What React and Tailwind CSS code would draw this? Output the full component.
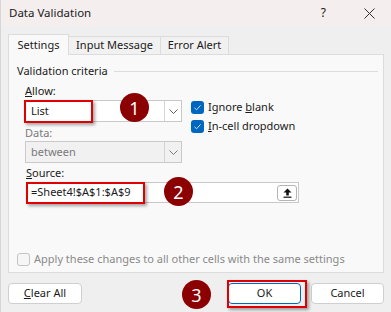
import React from "react";

const font = { fontFamily: '"Noto Sans", "Open Sans", Arial, sans-serif' };

function Badge({ n, className }) {
  return (
    <div
      className={`absolute w-[29px] h-[29px] rounded-full bg-[#8b0000] text-white flex items-center justify-center text-[18px] leading-none ${className}`}
    >
      {n}
    </div>
  );
}

function Check({ checked, disabled }) {
  if (checked) {
    return (
      <span className="w-[13px] h-[13px] rounded-[3px] bg-[#0067c0] flex items-center justify-center shrink-0">
        <svg width="9" height="9" viewBox="0 0 9 9">
          <path d="M1.5 4.8 L3.6 6.8 L7.5 2.4" stroke="#cfe3f5" strokeWidth="1" fill="none" />
        </svg>
      </span>
    );
  }
  return (
    <span
      className={`w-[13px] h-[13px] rounded-[3px] border shrink-0 ${disabled ? "border-[#c4c4c4] bg-[#f6f6f6]" : "border-[#888] bg-white"}`}
    />
  );
}

function Chevron({ color = "#5f5f5f" }) {
  return (
    <svg width="9" height="5" viewBox="0 0 9 5">
      <path d="M0.5 0.5 L4.5 4.5 L8.5 0.5" stroke={color} strokeWidth="1" fill="none" />
    </svg>
  );
}

export default function App() {
  return (
    <div
      className="relative w-[391px] h-[312px] bg-[#efefef] overflow-hidden text-[11px] text-[#1a1a1a] border-l border-[#d6d6d6]"
      style={font}
    >
      {/* Title bar */}
      <div className="h-[26px] bg-[#f4eeee] flex items-center pl-[8px] pr-[16px]">
        <span className="text-[11.5px]">Data Validation</span>
        <span className="ml-auto text-[12px] mr-[38px]">?</span>
        <svg width="11" height="11" viewBox="0 0 11 11">
          <path d="M0.5 0.5 L10.5 10.5 M10.5 0.5 L0.5 10.5" stroke="#333" strokeWidth="1" />
        </svg>
      </div>

      {/* Tabs */}
      <div className="flex items-end h-[28px] pl-[7px]">
        <div className="h-[21px] w-[61px] bg-[#f9f9f9] border border-b-0 border-[#dcdcdc] flex items-center justify-center relative top-[1px] z-10">
          Settings
        </div>
        <div className="h-[18px] w-[92px] bg-[#f1f1f1] border border-l-0 border-b-0 border-[#dcdcdc] flex items-center justify-center">
          Input Message
        </div>
        <div className="h-[18px] w-[68px] bg-[#f1f1f1] border border-l-0 border-b-0 border-[#dcdcdc] flex items-center justify-center">
          Error Alert
        </div>
      </div>

      {/* Panel */}
      <div className="relative mx-[7px] h-[219px] bg-[#f9f9f9] border border-[#dcdcdc]">
        <div className="flex items-center h-[15px] mt-[9px] pl-[8px] pr-[5px]">
          <span>Validation criteria</span>
          <div className="flex-1 h-px bg-[#dcdcdc] ml-[6px]" />
        </div>

        <div className="flex pl-[16px] mt-[4px]">
          <div className="w-[157px] flex flex-col">
            <span className="h-[16px] leading-[16px]">
              <u>A</u>llow:
            </span>
            <div className="mt-[1px] h-[22px] bg-white border border-[#c8c8c8] flex items-center">
              <span className="pl-[5px]">List</span>
              <div className="ml-auto h-full w-[17px] border-l border-[#d4d4d4] flex items-center justify-center">
                <Chevron />
              </div>
            </div>
            <span className="mt-[3px] h-[16px] leading-[16px] text-[#7a7a7a]">Data:</span>
            <div className="h-[22px] bg-[#f1f1f1] border border-[#cacaca] flex items-center text-[#7a7a7a]">
              <span className="pl-[5px]">between</span>
              <div className="ml-auto h-full w-[17px] border-l border-[#d4d4d4] flex items-center justify-center">
                <Chevron color="#7a7a7a" />
              </div>
            </div>
          </div>

          <div className="ml-[9px] pt-[18px] flex flex-col gap-[6px]">
            <div className="flex items-center gap-[4px] h-[13px]">
              <Check checked />
              <span>
                Ignore <u>b</u>lank
              </span>
            </div>
            <div className="flex items-center gap-[4px] h-[13px]">
              <Check checked />
              <span>
                <u>I</u>n-cell dropdown
              </span>
            </div>
          </div>
        </div>

        <div className="pl-[17px] mt-[2px] flex flex-col">
          <span className="h-[16px] leading-[16px]">
            <u>S</u>ource:
          </span>
          <div className="mt-[1px] w-[273px] h-[21px] bg-white border border-[#c8c8c8] flex items-center">
            <span className="pl-[4px]">=Sheet4!$A$1:$A$9</span>
            <div className="ml-auto mr-[1px] h-[16px] w-[20px] border border-[#b4b4b4] rounded-[3px] bg-white flex items-center justify-center">
              <svg width="9" height="10" viewBox="0 0 9 10">
                <path d="M4.5 0.5 L8.5 4.5 L5.8 4.5 L5.8 7.5 L3.2 7.5 L3.2 4.5 L0.5 4.5 Z" fill="#111" />
                <rect x="0.5" y="8.6" width="8" height="1.2" fill="#111" />
              </svg>
            </div>
          </div>
        </div>

        <div className="flex items-center gap-[4px] pl-[8px] mt-[48px] text-[#8a8a8a]">
          <Check disabled />
          <span>Apply these changes to all other cells with the same settings</span>
        </div>

        {/* Annotations over the form */}
        <div className="absolute left-[15px] top-[45px] w-[69px] h-[23px] border-2 border-[#e00000] shadow-[2px_2px_3px_rgba(0,0,0,0.35)]" />
        <Badge n="1" className="left-[111px] top-[38px]" />
        <div className="absolute left-[17px] top-[127px] w-[119px] h-[22px] border-2 border-[#e00000] shadow-[2px_2px_3px_rgba(0,0,0,0.35)]" />
        <Badge n="2" className="left-[155px] top-[122px]" />
      </div>

      {/* Bottom buttons */}
      <div className="relative flex items-start h-[39px] px-[7px] pt-[10px]">
        <button className="w-[74px] h-[21px] bg-white border border-[#cfcfcf] rounded-[4px] text-[11px]">
          <u>C</u>lear All
        </button>
        <div className="ml-auto flex gap-[10px]">
          <button className="w-[73px] h-[21px] bg-white border border-[#0067c0] rounded-[4px] text-[11px]">
            OK
          </button>
          <button className="w-[73px] h-[21px] bg-white border border-[#cfcfcf] rounded-[4px] text-[11px]">
            Cancel
          </button>
        </div>
        <div className="absolute left-[226px] top-[7px] w-[80px] h-[28px] border-2 border-[#e00000] shadow-[2px_2px_3px_rgba(0,0,0,0.35)]" />
        <Badge n="3" className="left-[181px] top-[7px]" />
      </div>
    </div>
  );
}
